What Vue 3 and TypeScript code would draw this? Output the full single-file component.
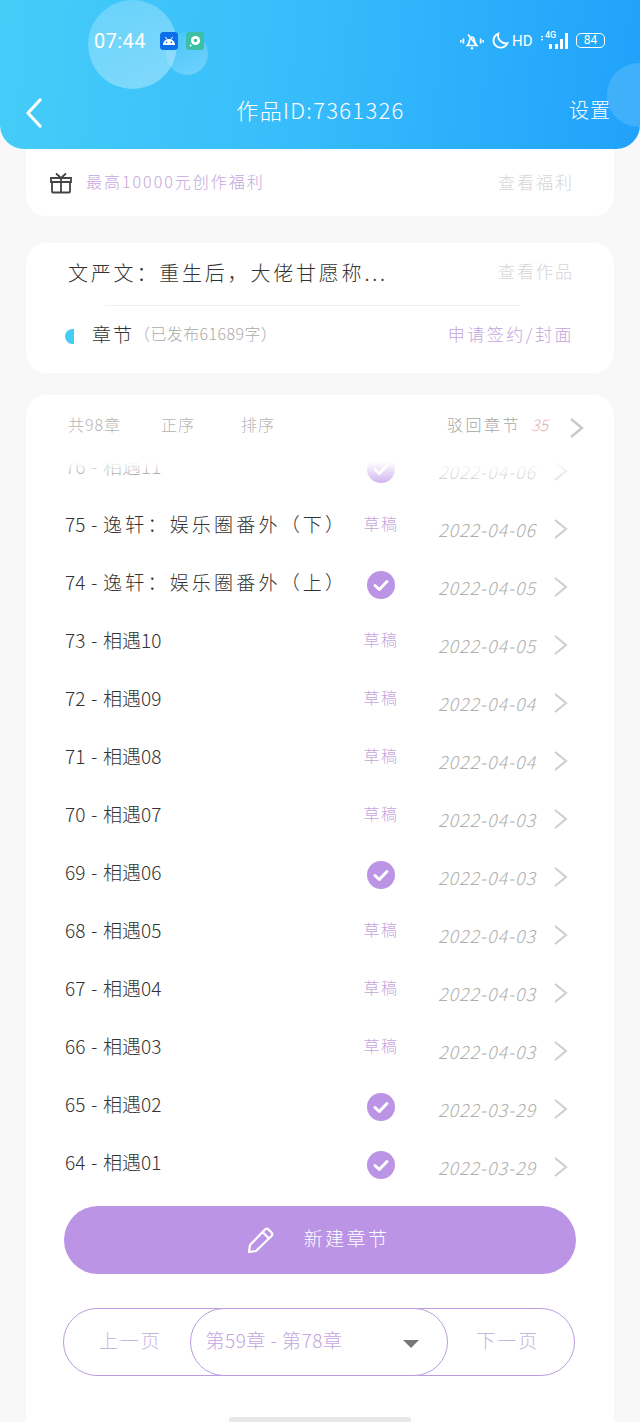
<script setup lang="ts">
interface Chapter {
  no: number
  title: string
  date: string
  published: boolean
}

const chapters: Chapter[] = [
  { no: 76, title: '相遇11', date: '2022-04-06', published: true },
  { no: 75, title: '逸轩：娱乐圈番外（下）', date: '2022-04-06', published: false },
  { no: 74, title: '逸轩：娱乐圈番外（上）', date: '2022-04-05', published: true },
  { no: 73, title: '相遇10', date: '2022-04-05', published: false },
  { no: 72, title: '相遇09', date: '2022-04-04', published: false },
  { no: 71, title: '相遇08', date: '2022-04-04', published: false },
  { no: 70, title: '相遇07', date: '2022-04-03', published: false },
  { no: 69, title: '相遇06', date: '2022-04-03', published: true },
  { no: 68, title: '相遇05', date: '2022-04-03', published: false },
  { no: 67, title: '相遇04', date: '2022-04-03', published: false },
  { no: 66, title: '相遇03', date: '2022-04-03', published: false },
  { no: 65, title: '相遇02', date: '2022-03-29', published: true },
  { no: 64, title: '相遇01', date: '2022-03-29', published: true }
]
</script>

<template>
  <div class="page">
    <header class="hero">
      <span class="bubble bubble-big"></span>
      <span class="bubble bubble-small"></span>
      <span class="bubble bubble-edge"></span>

      <div class="status">
        <div class="status-left">
          <span class="time">07:44</span>
          <svg class="app-icon" viewBox="0 0 18 18">
            <rect width="18" height="18" rx="3.5" fill="#0a6fe8" />
            <path d="M3 13c0-3.400 2.600-6 6-6s6 2.600 6 6z" fill="#fff" />
            <path d="M5.400 5l1.600 2.400M12.600 5L11 7.400" stroke="#fff" stroke-width="1" />
            <circle cx="6.600" cy="10.400" r=".8" fill="#0a6fe8" />
            <circle cx="11.400" cy="10.400" r=".8" fill="#0a6fe8" />
          </svg>
          <svg class="app-icon app-icon-green" viewBox="0 0 18 18">
            <rect width="18" height="18" rx="3.5" fill="#3dbfa6" />
            <circle cx="9.500" cy="8.500" r="4.600" fill="#fff" />
            <circle cx="9.500" cy="8.500" r="1.800" fill="#3dbfa6" />
            <circle cx="4.600" cy="13.400" r="1" fill="#fff" />
          </svg>
        </div>
        <div class="status-right">
          <svg class="ic-bell" viewBox="0 0 24 18" fill="none" stroke="#fff" stroke-width="1.700">
            <path d="M7.500 13.500c1.600-1.400 1.600-3 2-5 .4-2 1.300-3.500 2.500-3.500s2.100 1.500 2.500 3.500c.4 2 .4 3.600 2 5z" />
            <path d="M8 2.500L17 14" />
            <path d="M.8 8v2.500M3.400 6.500v5M20.600 6.500v5M23.200 8v2.500" />
            <circle cx="12" cy="16.300" r="1.200" fill="#fff" stroke="none" />
          </svg>
          <svg class="ic-moon" viewBox="0 0 16 16" fill="none" stroke="#fff" stroke-width="1.700">
            <path d="M6 1.500a6.800 6.800 0 1 0 8.500 9A7.200 7.200 0 0 1 6 1.500z" />
          </svg>
          <span class="hd">HD</span>
          <span class="signal">
            <span class="net">4G</span>
            <svg class="ic-bars" viewBox="0 0 27 16" fill="#fff">
              <rect x="0" y="3" width="2" height="1.300" />
              <rect x="0" y="6" width="2" height="1.300" />
              <rect x="8" y="11" width="3" height="5" />
              <rect x="14" y="11" width="3" height="5" />
              <rect x="19" y="6" width="3" height="10" />
              <rect x="24" y="0" width="3" height="16" />
            </svg>
          </span>
          <span class="battery">84</span>
        </div>
      </div>

      <nav class="nav">
        <svg class="back" viewBox="0 0 18 30" fill="none" stroke="#fff" stroke-width="3.200" stroke-linecap="round" stroke-linejoin="round">
          <path d="M15 2L3 15l12 13" />
        </svg>
        <h1 class="nav-title">作品ID:7361326</h1>
        <span class="nav-action">设置</span>
      </nav>
    </header>

    <section class="card welfare">
      <svg class="gift" viewBox="0 0 22 22" fill="none" stroke="#444" stroke-width="1.800">
        <rect x="2" y="10" width="18" height="10.500" rx="1" />
        <path d="M1 6h20v4H1zM11 6v14.500M6 1.500L11 6l5-4.500" />
      </svg>
      <span class="welfare-text">最高10000元创作福利</span>
      <span class="muted-link">查看福利</span>
    </section>

    <section class="card info">
      <div class="info-top">
        <span class="book-title">文严文：重生后，大佬甘愿称...</span>
        <span class="muted-link">查看作品</span>
      </div>
      <div class="divider"></div>
      <div class="info-bottom">
        <span class="marker"></span>
        <span class="section-name">章节</span>
        <span class="section-note">（已发布61689字）</span>
        <span class="apply">申请签约/封面</span>
      </div>
    </section>

    <section class="card chapters">
      <div class="toolbar">
        <span class="tool tool-count">共98章</span>
        <span class="tool tool-order">正序</span>
        <span class="tool tool-sort">排序</span>
        <span class="tool tool-rejected">驳回章节</span>
        <span class="rejected-count">35</span>
        <svg class="chev chev-top" viewBox="0 0 15 22" fill="none" stroke="#c9c9c9" stroke-width="2.400">
          <path d="M2 2l11 9L2 20" />
        </svg>
      </div>

      <div class="list-window">
        <div class="list">
          <div v-for="c in chapters" :key="c.no" class="row">
            <span class="row-title">
              <span class="row-no">{{ c.no }} - </span><span :class="{ 'row-name-long': c.title.length > 6 }">{{ c.title }}</span>
            </span>
            <span class="row-state">
              <svg v-if="c.published" class="check" viewBox="0 0 28 28">
                <circle cx="14" cy="14" r="14" fill="#bc94e6" />
                <path d="M8 14.500l4.300 4L20 10.500" fill="none" stroke="#fff" stroke-width="3" stroke-linecap="round" stroke-linejoin="round" />
              </svg>
              <span v-else class="draft">草稿</span>
            </span>
            <span class="row-date">{{ c.date }}</span>
            <svg class="chev chev-row" viewBox="0 0 15 22" fill="none" stroke="#d0d0d0" stroke-width="2.200">
              <path d="M2 2l11 9L2 20" />
            </svg>
          </div>
        </div>
        <div class="list-fade"></div>
      </div>

      <button class="create" type="button">
        <svg class="pencil" viewBox="0 0 28 28" fill="none" stroke="#fff" stroke-width="2.200" stroke-linejoin="round">
          <path d="M2 26l1-7L18 3.500a2.500 2.500 0 0 1 3.500 0l3 3a2.500 2.500 0 0 1 0 3.500L9 25z" />
          <path d="M15.500 6l6.500 6.500" />
        </svg>
        <span class="create-label">新建章节</span>
      </button>

      <div class="pager">
        <span class="page-btn page-prev">上一页</span>
        <div class="range">
          <span class="range-label">第59章 - 第78章</span>
          <i class="caret"></i>
        </div>
        <span class="page-btn page-next">下一页</span>
      </div>
    </section>

    <div class="home-bar"></div>
  </div>
</template>

<style>
html,
body {
  margin: 0;
  background: #f8f8f8;
}
</style>

<style scoped>
.page {
  position: relative;
  width: 640px;
  height: 1422px;
  overflow: hidden;
  background: #f8f8f8;
  font-family: "Noto Sans CJK SC", "Noto Sans", sans-serif;
  font-weight: 300;
  color: #333;
}

.hero {
  position: relative;
  height: 149px;
  box-sizing: border-box;
  overflow: hidden;
  border-radius: 0 0 24px 24px;
  background: linear-gradient(95deg, #45cdf8 0%, #38bdfb 45%, #20a2fb 100%);
  color: #fff;
}

.bubble {
  position: absolute;
  border-radius: 50%;
}

.bubble-big {
  left: 88px;
  top: 0;
  width: 89px;
  height: 89px;
  background: linear-gradient(150deg, rgba(255, 255, 255, 0.2), rgba(255, 255, 255, 0.36));
}

.bubble-small {
  left: 166px;
  top: 32px;
  width: 42px;
  height: 43px;
  background: linear-gradient(150deg, rgba(255, 255, 255, 0.04), rgba(255, 255, 255, 0.28));
}

.bubble-edge {
  left: 607px;
  top: 63px;
  width: 64px;
  height: 64px;
  background: rgba(255, 255, 255, 0.14);
}

.status {
  position: relative;
  height: 81px;
  display: flex;
  justify-content: space-between;
  align-items: center;
  padding: 0 35px 0 94px;
}

.status-left,
.status-right {
  display: flex;
  align-items: center;
}

.time {
  width: 66px;
  font-family: Roboto, "Noto Sans", sans-serif;
  font-size: 20px;
  font-weight: 400;
  letter-spacing: 0.4px;
}

.app-icon {
  width: 18px;
  height: 18px;
}

.app-icon-green {
  margin-left: 8px;
}

.ic-bell {
  width: 24px;
  height: 18px;
}

.ic-moon {
  width: 17px;
  height: 17px;
  margin-left: 8px;
}

.hd {
  width: 20px;
  margin-left: 3px;
  font-family: Roboto, sans-serif;
  font-size: 15px;
  font-weight: 400;
  white-space: nowrap;
}

.signal {
  position: relative;
  width: 27px;
  height: 16px;
  margin-left: 9px;
}

.net {
  position: absolute;
  left: 4px;
  top: -3px;
  font-family: Roboto, sans-serif;
  font-size: 9px;
  font-weight: 500;
}

.ic-bars {
  position: absolute;
  inset: 0;
}

.battery {
  box-sizing: border-box;
  width: 29px;
  height: 15px;
  margin-left: 8px;
  border: 1.500px solid #fff;
  border-radius: 5px;
  font-family: Roboto, sans-serif;
  font-size: 12px;
  font-weight: 400;
  line-height: 12px;
  text-align: center;
}

.nav {
  position: relative;
  height: 60px;
  display: flex;
  align-items: center;
  padding: 0 29px 0 25px;
}

.back {
  width: 18px;
  height: 30px;
  margin-top: 4px;
}

.nav-title {
  flex: 1;
  margin: 0 0 4px;
  padding-left: 29px;
  font-size: 22px;
  font-weight: 300;
  letter-spacing: 1.300px;
  text-align: center;
}

.nav-action {
  margin-bottom: 4px;
  font-size: 20px;
  letter-spacing: 1px;
}

.card {
  margin: 0 26px;
  background: #fff;
  border-radius: 20px;
}

.welfare {
  height: 67px;
  box-sizing: border-box;
  display: flex;
  align-items: center;
  padding: 0 40px 0 24px;
  border-radius: 0 0 20px 20px;
}

.gift {
  width: 22px;
  height: 22px;
  margin: 1px 14px 0 0;
  flex: none;
}

.welfare-text {
  flex: 1;
  margin-bottom: 3px;
  font-size: 16px;
  letter-spacing: 2px;
  color: #c3a6dd;
}

.muted-link {
  margin-bottom: 3px;
  font-size: 17px;
  letter-spacing: 2px;
  color: #d6d6d6;
}

.info {
  height: 130px;
  margin-top: 27px;
  box-sizing: border-box;
  padding: 0 40px 0 39px;
}

.info-top {
  height: 62px;
  display: flex;
  align-items: center;
  justify-content: space-between;
  padding: 0 0 4px 3px;
  box-sizing: border-box;
}

.book-title {
  font-size: 20px;
  letter-spacing: 2.800px;
  color: #333;
}

.divider {
  height: 1px;
  margin: 0 54px 0 40px;
  background: #f0f0f0;
}

.info-bottom {
  display: flex;
  align-items: center;
  height: 60px;
  padding-bottom: 6px;
  box-sizing: border-box;
}

.marker {
  width: 9px;
  height: 15px;
  margin: 6px 18px 0 0;
  border-radius: 8px 0 0 8px;
  background: #46cdf5;
}

.section-name {
  font-size: 19px;
  letter-spacing: 2px;
  color: #333;
}

.section-note {
  flex: 1;
  font-size: 16px;
  letter-spacing: 0.4px;
  color: #aaa;
}

.apply {
  font-size: 17px;
  letter-spacing: 2.500px;
  color: #c3a6dd;
}

.chapters {
  position: relative;
  height: 1100px;
  margin-top: 22px;
}

.toolbar {
  height: 67px;
  display: flex;
  align-items: center;
  padding: 0 30px 10px 42px;
  box-sizing: border-box;
  font-size: 16px;
  color: #b5b5b5;
}

.tool {
  letter-spacing: 1px;
}

.tool-count {
  width: 93px;
}

.tool-order {
  width: 80px;
}

.tool-sort {
  width: 206px;
}

.tool-rejected {
  width: 84px;
  color: #a5a5a5;
  letter-spacing: 2.500px;
}

.rejected-count {
  width: 38px;
  font-style: italic;
  color: #e6b4b4;
}

.chev {
  width: 15px;
  height: 22px;
  flex: none;
}

.chev-top {
  margin-top: 8px;
}

.chev-row {
  margin-top: 8px;
}

.list-window {
  position: relative;
  height: 732px;
  overflow: hidden;
}

.list {
  margin-top: -24px;
}

.list-fade {
  position: absolute;
  left: 0;
  right: 0;
  top: 0;
  height: 24px;
  background: linear-gradient(180deg, #fff 0%, rgba(255, 255, 255, 0.2) 100%);
}

.row {
  height: 58px;
  display: flex;
  align-items: center;
  padding: 0 46px 0 39px;
}

.row-title {
  width: 283px;
  font-size: 19px;
  white-space: pre;
  color: #333;
  padding-bottom: 4px;
}

.row-no {
  word-spacing: 1.500px;
}

.row-name-long {
  letter-spacing: 3.200px;
}

.row-state {
  width: 66px;
  display: flex;
  justify-content: center;
}

.draft {
  font-size: 16px;
  letter-spacing: 1.500px;
  color: #c3a6dd;
  padding-bottom: 4px;
}

.check {
  width: 28px;
  height: 28px;
  margin-top: 4px;
}

.row-date {
  width: 115px;
  margin-left: 24px;
  padding-top: 8px;
  font-size: 18px;
  font-style: italic;
  letter-spacing: 0.9px;
  color: #b0b0b0;
  white-space: nowrap;
}

.create {
  width: 512px;
  height: 68px;
  margin: 12px 0 0 38px;
  display: flex;
  align-items: center;
  justify-content: center;
  gap: 29px;
  border: 0;
  border-radius: 34px;
  background: #bc94e6;
  color: #fff;
  font-family: inherit;
  font-weight: 300;
  font-size: 19px;
  letter-spacing: 2.400px;
  padding: 0 4px 0 0;
}

.create-label {
  margin-bottom: 5px;
}

.pencil {
  width: 28px;
  height: 28px;
}

.pager {
  width: 512px;
  height: 68px;
  box-sizing: border-box;
  margin: 34px 0 0 37px;
  display: flex;
  align-items: center;
  border: 1.800px solid #bb9cdd;
  border-radius: 34px;
}

.page-btn {
  flex: 1;
  margin-bottom: 6px;
  text-align: center;
  font-size: 19px;
  letter-spacing: 2px;
  color: #c9b6de;
}

.page-prev {
  padding-left: 6px;
}

.page-next {
  padding-right: 6px;
}

.range {
  box-sizing: border-box;
  width: 258px;
  height: 68px;
  flex: none;
  margin-left: -1px;
  display: flex;
  align-items: center;
  justify-content: space-between;
  padding: 0 28px 0 15px;
  border: 1.800px solid #bb9cdd;
  border-radius: 34px;
  background: #fff;
  font-size: 19px;
  letter-spacing: 0.5px;
  color: #c3a6dd;
  white-space: nowrap;
}

.range-label {
  margin-bottom: 6px;
}

.caret {
  width: 0;
  height: 0;
  margin-top: 4px;
  border-left: 8px solid transparent;
  border-right: 8px solid transparent;
  border-top: 8px solid #777;
}

.home-bar {
  position: absolute;
  left: 229px;
  bottom: 0;
  width: 182px;
  height: 5px;
  border-radius: 3px 3px 0 0;
  background: #e8e8e8;
}
</style>
